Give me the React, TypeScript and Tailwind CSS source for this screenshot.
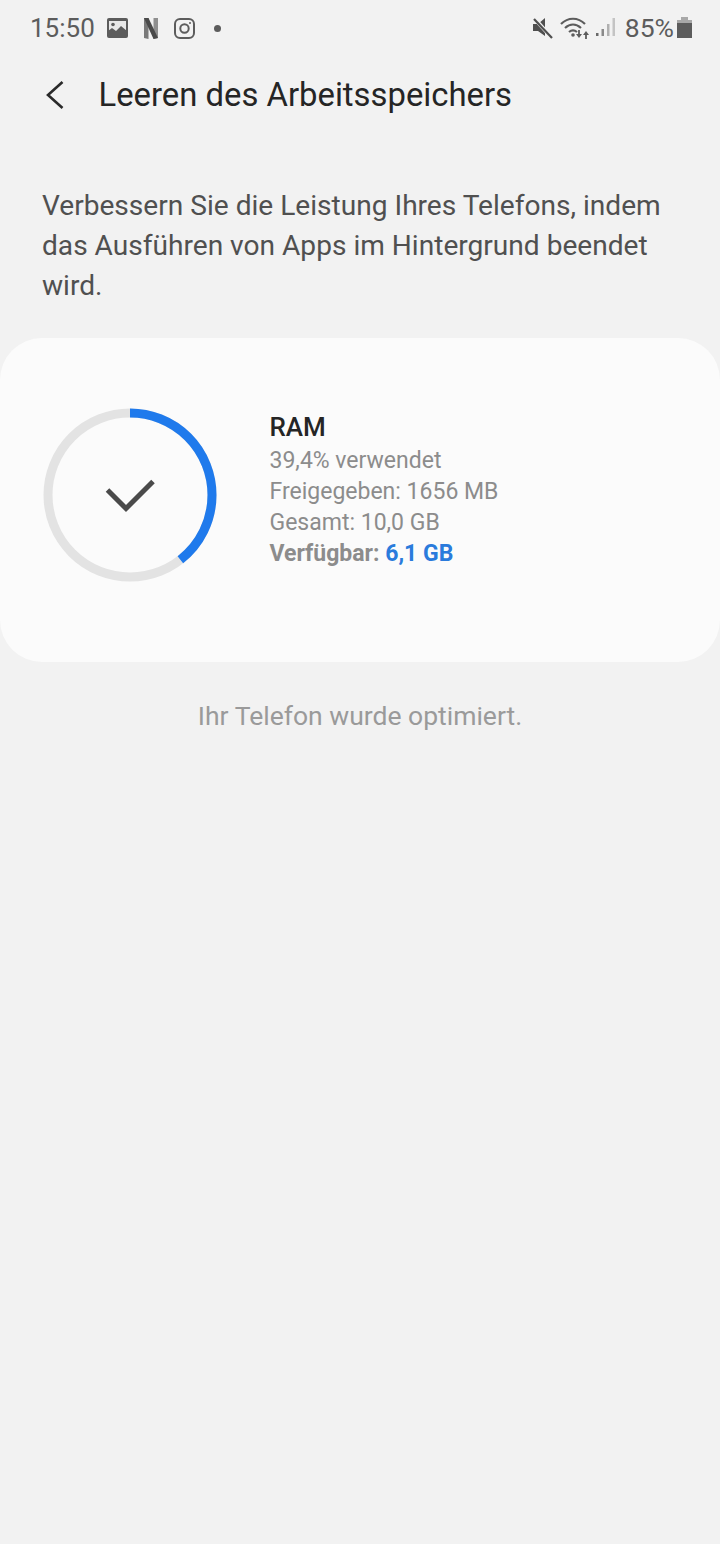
const USED_PERCENT = 39.4

function StatusIcons() {
  return (
    <div className="flex items-center text-[#5c5c5c]">
      {/* muted speaker */}
      <svg width="22" height="24" viewBox="0 0 22 24" className="mr-[6px]">
        <path d="M1 8h5l7-6v18l-7-5H1z" fill="#4f4f4f" />
        <path d="M2 2l18 20" stroke="#f2f2f2" strokeWidth="4" />
        <path d="M2 3l18 19" stroke="#4f4f4f" strokeWidth="2.2" />
      </svg>
      {/* wifi with up/down arrows */}
      <svg width="30" height="24" viewBox="0 0 30 24" className="mr-[6px]">
        <g fill="none" stroke="#5c5c5c" strokeWidth="2.2">
          <path d="M1 8c7-7 17-7 24 0" />
          <path d="M5 12c5-4.500 11-4.500 16 0" />
          <path d="M9 16c3-2.500 5-2.500 8 0" />
        </g>
        <circle cx="13" cy="19" r="1.800" fill="#5c5c5c" />
        <path d="M16 18h6l-3 4zM23 19l3-4 3 4z" fill="#5c5c5c" />
        <path d="M19 14v5M26 18v5" stroke="#5c5c5c" strokeWidth="1.800" />
      </svg>
      {/* signal bars */}
      <svg width="20" height="22" viewBox="0 0 20 22" className="mr-[9px]">
        <rect x="0" y="16" width="2.500" height="3" fill="#6a6a6a" />
        <rect x="5.500" y="12" width="2.500" height="7" fill="#8a8a8a" />
        <rect x="11" y="7" width="2.500" height="12" fill="#b0b0b0" />
        <rect x="16.500" y="1" width="2.500" height="18" fill="#c4c4c4" />
      </svg>
      <span className="text-[26.500px] leading-none">85%</span>
      {/* battery */}
      <svg width="15" height="22" viewBox="0 0 15 22" className="ml-[3px]">
        <rect x="4" y="0" width="7" height="3" fill="#a8a8a8" />
        <rect x="0" y="3" width="15" height="3" fill="#a8a8a8" />
        <rect x="0" y="6" width="15" height="15" fill="#5c5c5c" />
      </svg>
    </div>
  )
}

function NotificationIcons() {
  return (
    <div className="flex items-center ml-[12px] text-[#5c5c5c]">
      {/* gallery */}
      <svg width="21" height="20" viewBox="0 0 21 20">
        <rect width="21" height="20" rx="2" fill="#5c5c5c" />
        <rect x="2" y="3" width="17" height="13" fill="#e8e8e8" />
        <circle cx="6" cy="6.500" r="1.800" fill="#5c5c5c" />
        <path d="M1 18v-5l4-3 4 3 5-5 6 5v5z" fill="#5c5c5c" />
      </svg>
      {/* netflix mark */}
      <svg width="14" height="21" viewBox="0 0 14 21" className="ml-[16px]">
        <path d="M0 0h4.500v21L0 20z" fill="#7a7a7a" />
        <path d="M9.500 0H14v20l-4.500 1z" fill="#8f8f8f" />
        <path d="M0 0h4.500L14 20l-4.500 1z" fill="#4a4a4a" />
      </svg>
      {/* instagram */}
      <svg width="21" height="21" viewBox="0 0 21 21" fill="none" stroke="#5c5c5c" strokeWidth="2" className="ml-[16px]">
        <rect x="1" y="1" width="19" height="19" rx="5" />
        <circle cx="10.500" cy="10.500" r="4.200" />
        <circle cx="16" cy="5" r="1" fill="#5c5c5c" stroke="none" />
      </svg>
      <span className="ml-[19px] w-[7px] h-[7px] rounded-full bg-[#5c5c5c]" />
    </div>
  )
}

function RamRing() {
  const radius = 82
  const circumference = 2 * Math.PI * radius
  const used = (circumference * USED_PERCENT) / 100

  return (
    <div className="relative w-[174px] h-[174px] shrink-0">
      <svg width="174" height="174" viewBox="0 0 174 174" fill="none">
        <circle cx="87" cy="87" r={radius} stroke="#e3e3e3" strokeWidth="9" />
        <circle
          cx="87"
          cy="87"
          r={radius}
          stroke="#1f7aec"
          strokeWidth="9"
          strokeDasharray={`${used} ${circumference}`}
          transform="rotate(-90 87 87)"
        />
        <path d="M64.500 82l18.500 18.500L110 73.500" stroke="#4a4a4a" strokeWidth="5" strokeLinejoin="miter" />
      </svg>
    </div>
  )
}

export default function App() {
  return (
    <div className="w-[720px] h-[1544px] bg-[#f2f2f2] overflow-hidden font-['Roboto',sans-serif]">
      <div className="flex items-center justify-between h-[56px] pl-[30px] pr-[28px]">
        <div className="flex items-center">
          <span className="text-[26px] leading-none text-[#5c5c5c]">15:50</span>
          <NotificationIcons />
        </div>
        <StatusIcons />
      </div>

      <div className="flex items-center h-[78px] pl-[46px]">
        {/* back chevron */}
        <svg width="18" height="28" viewBox="0 0 18 28" fill="none" stroke="#2a2a2a" strokeWidth="2.6">
          <path d="M16.500 1L2 14l14.500 13" />
        </svg>
        <h1 className="ml-[34.500px] text-[32.850px] leading-none text-[#252525]">Leeren des Arbeitsspeichers</h1>
      </div>

      <p className="mt-[52px] px-[42px] text-[28.100px] leading-[40px] text-[#505050]">
        Verbessern Sie die Leistung Ihres Telefons, indem das Ausführen von Apps im Hintergrund beendet wird.
      </p>

      <section className="mt-[32px] h-[324px] bg-[#fbfbfb] rounded-[42px] flex items-start pt-[70px] pl-[42.500px]">
        <RamRing />
        <div className="ml-[53px] mt-[1px]">
          <div className="text-[26px] font-medium leading-[36px] text-[#252525]">RAM</div>
          <div className="text-[23px] leading-[31px] text-[#8c8c8c]">
            <div>39,4% verwendet</div>
            <div>Freigegeben: 1656 MB</div>
            <div>Gesamt: 10,0 GB</div>
            <div className="font-bold">
              Verfügbar: <span className="text-[#2a7bdc]">6,1 GB</span>
            </div>
          </div>
        </div>
      </section>

      <p className="mt-[37px] text-center text-[26.500px] leading-[33px] text-[#9a9a9a]">Ihr Telefon wurde optimiert.</p>
    </div>
  )
}
